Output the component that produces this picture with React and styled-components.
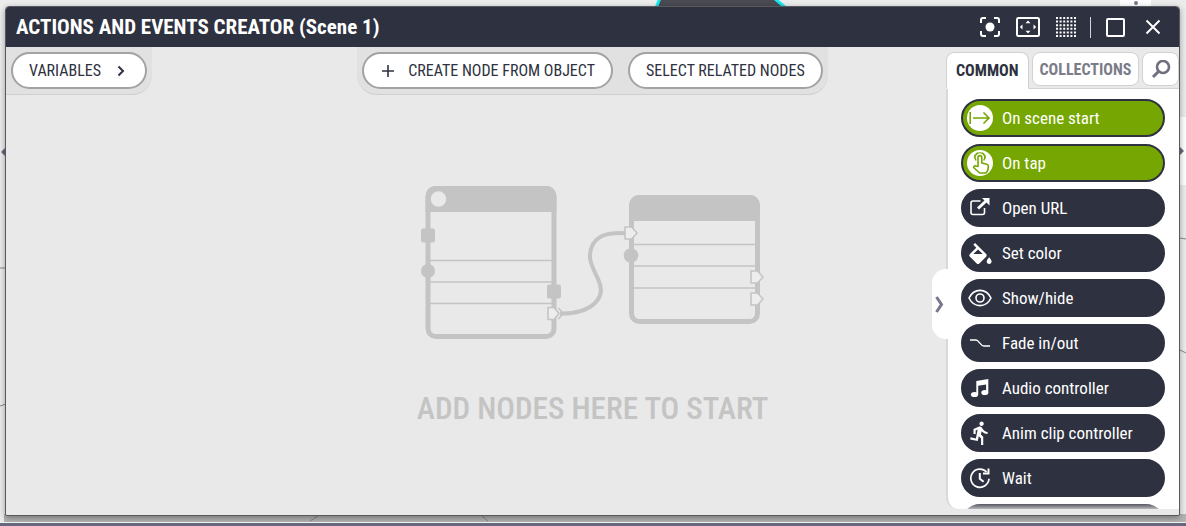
import React from "react";
import styled, { createGlobalStyle } from "styled-components";
import { MdDirectionsRun } from "react-icons/md";

const ink = "#2e3140";
const canvasGrey = "#e9e9e9";
const shapeGrey = "#c4c4c4";

const GlobalStyle = createGlobalStyle`
  *, *::before, *::after { box-sizing: border-box; }
  body {
    margin: 0;
    font-family: "Roboto Condensed", "Liberation Sans Narrow", Roboto, sans-serif;
    color: ${ink};
  }
  button { font: inherit; color: inherit; cursor: pointer; }
  svg { display: block; }
`;

const Page = styled.div`
  position: relative;
  display: flex;
  flex-direction: column;
  height: 100vh;
  min-height: 240px;
  overflow: hidden;
  background: #ececec;
`;

const Scene = styled.svg`
  position: absolute;
  inset: 0;
  width: 100%;
  height: 100%;
`;

const SceneFloor = styled.div`
  position: absolute;
  inset: auto 0 4px 4px;
  height: 8px;
  background: #b4b4b4;
`;

const StatusStrip = styled.footer`
  position: relative;
  height: 4px;
  border-top: 1px solid #f0f0f0;
  background: #66687f;
`;

const Dialog = styled.section`
  position: relative;
  flex: 1;
  min-height: 0;
  display: flex;
  flex-direction: column;
  margin: 6px 6px 6px 5px;
  border: 1px solid #58595c;
  border-radius: 4px 4px 2px 2px;
  background: ${canvasGrey};
  overflow: hidden;
  box-shadow: 0 2px 6px rgba(0, 0, 0, 0.35);
`;

const TitleBar = styled.header`
  flex: none;
  display: flex;
  align-items: center;
  justify-content: space-between;
  height: 40px;
  padding: 0 12px 0 10px;
  background: ${ink};
  color: #fff;
`;

const Title = styled.h1`
  margin: 0;
  font-size: 21px;
  line-height: 24px;
  font-weight: 700;
`;

const WindowTools = styled.div`
  display: flex;
  align-items: center;
  gap: 10px;
`;

const ToolButton = styled.button`
  display: grid;
  place-items: center;
  width: 28px;
  height: 28px;
  padding: 0;
  border: 0;
  background: none;
`;

const Divider = styled.span`
  width: 1px;
  height: 21px;
  background: #d5d5da;
`;

const Body = styled.div`
  flex: 1;
  min-height: 0;
  display: grid;
  grid-template-columns: minmax(0, 1fr) 248px;
  grid-template-rows: minmax(0, 1fr);
`;

const Canvas = styled.main`
  grid-column: 1 / -1;
  grid-row: 1;
  display: flex;
  flex-direction: column;
`;

const Toolbar = styled.div`
  display: grid;
  grid-template-columns: 1fr auto 1fr;
  align-items: start;
`;

const ButtonTray = styled.div`
  justify-self: start;
  display: flex;
  gap: 15px;
  height: 48px;
  padding: 5px;
  border-bottom: 1px solid #cfcfcf;
  border-radius: ${(p) => (p.$docked ? "0 0 20px 0" : "0 0 20px 20px")};
  background: #e1e1e1;
`;

const PillButton = styled.button`
  display: flex;
  align-items: center;
  gap: 12px;
  height: 37px;
  padding: 0 16px;
  border: 2px solid #a3a3a3;
  border-radius: 19px;
  background: #fff;
  font-size: 16px;
  line-height: 20px;
  white-space: nowrap;
`;

const EmptyState = styled.div`
  display: flex;
  flex-direction: column;
  align-items: center;
  gap: 52px;
  padding-top: 90px;
`;

const EmptyText = styled.p`
  margin: 0;
  font-size: 31px;
  line-height: 36px;
  font-weight: 500;
  color: ${shapeGrey};
`;

const Sidebar = styled.aside`
  grid-column: 2;
  grid-row: 1;
  z-index: 1;
  min-height: 0;
  display: grid;
  grid-template-columns: 15px minmax(0, 1fr);
  grid-template-rows: auto minmax(0, 1fr);
  padding: 5px 0 6px;
`;

const Tabs = styled.div`
  grid-column: 2;
  display: flex;
  align-items: flex-start;
  gap: 3px;
  height: 37px;
  border-bottom: 1px solid #d2d2d2;
`;

const Tab = styled.button`
  display: grid;
  place-items: center;
  height: ${(p) => (p.$active ? "37px" : "34px")};
  flex: ${(p) => p.$grow ?? 0} 0 auto;
  padding: ${(p) => (p.$active ? "0 9px" : "1px 7px 0")};
  border: 1px solid #d2d2d2;
  border-bottom-color: ${(p) => (p.$active ? "#fff" : "#d2d2d2")};
  border-radius: ${(p) => (p.$active ? "8px 8px 0 0" : "8px")};
  background: #fff;
  font-size: 16px;
  line-height: 20px;
  font-weight: 700;
  color: ${(p) => (p.$active ? ink : "#7b7c88")};
`;

const Handle = styled.button`
  grid-column: 1;
  grid-row: 2;
  align-self: start;
  z-index: 1;
  display: flex;
  align-items: center;
  height: 70px;
  margin: 180px -2px 0 1px;
  padding: 0 3px;
  border: 0;
  border-radius: 14px 0 0 14px;
  background: #fff;
`;

const NodePanel = styled.div`
  grid-column: 2;
  grid-row: 2;
  min-height: 0;
  padding: 10px 14px 0 13px;
  border-left: 2px solid #d8d8d8;
  border-radius: 0 0 0 12px;
  background: #fff;
  overflow: hidden;
`;

const NodeList = styled.ul`
  display: flex;
  flex-direction: column;
  gap: 7px;
  height: 100%;
  margin: 0;
  padding: 0;
  list-style: none;
  overflow: hidden;
`;

const NodeItem = styled.li`
  flex: none;
`;

const NodeButton = styled.button`
  display: flex;
  align-items: center;
  gap: 9px;
  width: 100%;
  height: 38px;
  padding: 0 4px;
  border: 2px solid ${ink};
  border-radius: 19px;
  background: ${(p) => (p.$trigger ? "#76a602" : ink)};
  color: #fff;
  font-size: 17px;
  line-height: 20px;
  white-space: nowrap;
`;

const NextNode = styled.div`
  height: 38px;
  border-radius: 19px;
  background: linear-gradient(#55565f, #b8b8bc 5px);
`;

const IconSlot = styled.span`
  display: grid;
  place-items: center;
  width: 26px;
  height: 26px;
  border-radius: 50%;
  background: ${(p) => (p.$trigger ? "#fff" : "transparent")};
  color: ${(p) => (p.$trigger ? "#76a602" : "#fff")};
`;

const line = { fill: "none", stroke: "currentColor" };

const FocusIcon = () => (
  <svg width="20" height="20" viewBox="0 0 20 20" {...line} strokeWidth="2">
    <path d="M1 6V3a2 2 0 0 1 2-2h3M14 1h3a2 2 0 0 1 2 2v3M19 14v3a2 2 0 0 1-2 2h-3M6 19H3a2 2 0 0 1-2-2v-3" />
    <circle cx="10" cy="10" r="4.5" fill="currentColor" stroke="none" />
  </svg>
);
const FitIcon = () => (
  <svg width="24" height="20" viewBox="0 0 24 20">
    <rect x="1" y="1" width="22" height="18" rx="1.5" {...line} strokeWidth="2" />
    <path fill="currentColor" d="M12 3.5l2.5 2.7h-5zM12 16.5l2.5-2.7h-5zM3.8 10l2.7-2.5v5zM20.2 10l-2.7-2.5v5z" />
  </svg>
);
const GridIcon = () => (
  <svg width="20" height="20" viewBox="0 0 20 20" {...line} strokeWidth="2" strokeDasharray="2 1.6">
    <path d="M0 1h20M0 4.6h20M0 8.2h20M0 11.8h20M0 15.4h20M0 19h20" />
  </svg>
);
const MaximizeIcon = () => (
  <svg width="20" height="20" viewBox="0 0 20 20" {...line} strokeWidth="2">
    <rect x="2" y="2" width="17" height="17" rx="1" />
  </svg>
);
const CloseIcon = () => (
  <svg width="16" height="16" viewBox="0 0 16 16" {...line} strokeWidth="2">
    <path d="M1.500 1.500l13 13M14.500 1.500l-13 13" />
  </svg>
);
const PlusIcon = () => (
  <svg width="16" height="16" viewBox="0 0 16 16" {...line} strokeWidth="1.6">
    <path d="M2 8h12M8 2v12" />
  </svg>
);
const ChevronIcon = () => (
  <svg width="16" height="16" viewBox="0 0 16 16" {...line} strokeWidth="2">
    <path d="M5.5 3.500L10 8l-4.500 4.500" />
  </svg>
);
const HandleIcon = () => (
  <svg width="9" height="17" viewBox="0 0 9 17" fill="none" stroke="#777889" strokeWidth="3">
    <path d="M1.5 1l5 7.500-5 7.500" />
  </svg>
);
const SearchIcon = () => (
  <svg width="20" height="20" viewBox="0 0 20 20" fill="none" stroke="#6f707d" strokeWidth="2.6">
    <circle cx="12" cy="7" r="6" />
    <path d="M7.5 11.5L2 17" strokeWidth="3" />
  </svg>
);
const StartIcon = () => (
  <svg width="24" height="24" viewBox="0 0 24 24" {...line} strokeWidth="1.6">
    <path d="M2.200 6v12M5 12h16M15.500 6.500L21 12l-5.500 5.500" />
  </svg>
);
const TapIcon = () => (
  <svg width="24" height="24" viewBox="0 0 24 24" {...line} strokeWidth="1.6" strokeLinejoin="round">
    <path d="M10 15.500V6.500a1.900 1.900 0 0 1 3.800 0V12l5 1.200q1.800.5 1.600 2.300l-.8 4.300-1.700 2.200h-6.300l-6-5.500q.5-2.200 2.600-1.500z" />
    <path d="M8.200 9.500A4.700 4.700 0 1 1 15.600 9.500" strokeWidth="1.3" />
    <path d="M6.400 7.500A5.600 5.600 0 0 1 9.500 1.600M14.300 1.600A5.600 5.600 0 0 1 17.400 7.500" strokeWidth="1" />
  </svg>
);
const LinkIcon = () => (
  <svg width="20" height="20" viewBox="0 0 20 20">
    <path d="M10.500 3H3a2 2 0 0 0-2 2v9.500a2 2 0 0 0 2 2H12.500a2 2 0 0 0 2-2v-4.500" {...line} strokeWidth="1.6" />
    <path d="M8 10.500L16 3" {...line} strokeWidth="3" />
    <path d="M12 0H19.500v7.500z" fill="currentColor" />
  </svg>
);
const FillIcon = () => (
  <svg width="23" height="21" viewBox="3 0 18 17" fill="currentColor">
    <path d="M16.560 8.940L7.620 0 6.210 1.410l2.380 2.380-5.150 5.150a1.490 1.490 0 0 0 0 2.120l5.500 5.500c.29.29.68.44 1.060.44s.77-.15 1.060-.44l5.500-5.500c.59-.58.59-1.530 0-2.120zM6.200 9L10 5.210 13.800 9zM19 11.500s-2 2.170-2 3.500c0 1.100.9 2 2 2s2-.9 2-2c0-1.330-2-3.500-2-3.500z" />
  </svg>
);
const EyeIcon = () => (
  <svg width="24" height="18" viewBox="0 0 24 18" {...line} strokeWidth="1.6">
    <path d="M1 9C6-1.200 18-1.200 23 9C18 19.200 6 19.200 1 9z" />
    <circle cx="12" cy="9" r="4" />
  </svg>
);
const FadeIcon = () => (
  <svg width="22" height="10" viewBox="0 0 22 10" {...line} strokeWidth="1.3">
    <path d="M1 2h6c3 0 4 6 8 6h6" />
  </svg>
);
const NotesIcon = () => (
  <svg width="20" height="20" viewBox="0 0 20 20" fill="currentColor">
    <ellipse cx="4.500" cy="16.500" rx="3.600" ry="2.600" />
    <ellipse cx="14.800" cy="14.500" rx="3.500" ry="2.600" />
    <path d="M6.300 3L18.300 1v13.500h-2.200V6.400L8.200 7.800v8.700H6.300z" />
  </svg>
);
const RunIcon = () => <MdDirectionsRun size={26} />;
const WaitIcon = () => (
  <svg width="22" height="22" viewBox="0 0 22 22" {...line} strokeWidth="1.7">
    <path d="M20 11.800A9.100 9.100 0 1 1 17.600 5" />
    <path d="M19.500 1.500V6.500H14" strokeWidth="2" />
    <path d="M10.800 6v5.800l3.800 3" strokeWidth="2" />
  </svg>
);

const EmptyDrawing = () => (
  <svg width="346" height="154" viewBox="0 0 346 154" role="img" aria-label="Two connected nodes">
    <g fill="none" stroke={shapeGrey}>
      <rect x="8" y="3.500" width="126" height="148" rx="8" strokeWidth="5" />
      <rect x="211.500" y="12.500" width="126" height="124" rx="8" strokeWidth="5" />
      <path strokeWidth="1.5" d="M10 75.500h122M10 97h122M10 118.500h122M214 59.500h121M214 81h121M214 103h121" />
      <path strokeWidth="4" d="M140 128.500C170 129 188 114 178 94C170 78 167 70 173 59C180 48 192 48 206 48" />
    </g>
    <g fill={shapeGrey}>
      <path d="M5.500 27V11a10 10 0 0 1 10-10h111a10 10 0 0 1 10 10v16zM209 36V20a10 10 0 0 1 10-10h111a10 10 0 0 1 10 10v16z" />
      <rect x="1" y="43.500" width="14" height="14" rx="2" />
      <circle cx="8" cy="86" r="7" />
      <rect x="127" y="99.500" width="14" height="14" rx="2" />
      <circle cx="211" cy="70.500" r="7.300" />
    </g>
    <circle cx="18.500" cy="14" r="7.700" fill={canvasGrey} />
    <g fill="#ededed" stroke={shapeGrey} strokeWidth="1.600" strokeLinejoin="round">
      <path d="M128 122.500h6l5 6-5 6h-6zM205 42h6.500l5.500 6-5.500 6H205zM331 86h6.500l5.500 6-5.500 6H331zM331 108h6.500l5.500 6-5.500 6H331z" />
      <path fill="none" d="M138.500 123l4.500 5.500-4.500 5.500" />
    </g>
  </svg>
);

const nodes = [
  { label: "On scene start", icon: StartIcon, trigger: true },
  { label: "On tap", icon: TapIcon, trigger: true },
  { label: "Open URL", icon: LinkIcon },
  { label: "Set color", icon: FillIcon },
  { label: "Show/hide", icon: EyeIcon },
  { label: "Fade in/out", icon: FadeIcon },
  { label: "Audio controller", icon: NotesIcon },
  { label: "Anim clip controller", icon: RunIcon },
  { label: "Wait", icon: WaitIcon },
];

const tools = [
  ["Focus", FocusIcon],
  ["Fit to view", FitIcon],
  ["Toggle grid", GridIcon],
];

export default function App() {
  return (
    <Page>
      <GlobalStyle />
      <SceneFloor />
      <Scene aria-hidden="true">
        <path d="M656 8l4-10h114l12 10z" fill="#4a4b52" stroke="#19e6ee" strokeWidth="3" />
        <rect x="1120" width="31" height="7" fill="#fff" />
        <circle cx="1136" cy="3" r="2" fill="#777889" />
        <rect x="1180" y="117" width="6" height="68" fill="#fff" />
        <path d="M5 148v8l-4-4zM1180 147v8l4-4z" fill="#666879" />
        <path d="M0 406l6-2M310 521l8-5M482 516l6 5M1180 238l6 1M1180 350l6 3M0 268h6" fill="none" stroke="#85868f" />
      </Scene>
      <Dialog aria-label="Actions and events creator">
        <TitleBar>
          <Title>ACTIONS AND EVENTS CREATOR (Scene 1)</Title>
          <WindowTools>
            {tools.map(([name, Icon]) => (
              <ToolButton key={name} aria-label={name}><Icon /></ToolButton>
            ))}
            <Divider />
            <ToolButton aria-label="Maximize"><MaximizeIcon /></ToolButton>
            <ToolButton aria-label="Close"><CloseIcon /></ToolButton>
          </WindowTools>
        </TitleBar>
        <Body>
          <Canvas>
            <Toolbar>
              <ButtonTray $docked>
                <PillButton>VARIABLES <ChevronIcon /></PillButton>
              </ButtonTray>
              <ButtonTray>
                <PillButton><PlusIcon /> CREATE NODE FROM OBJECT</PillButton>
                <PillButton>SELECT RELATED NODES</PillButton>
              </ButtonTray>
            </Toolbar>
            <EmptyState>
              <EmptyDrawing />
              <EmptyText>ADD NODES HERE TO START</EmptyText>
            </EmptyState>
          </Canvas>
          <Sidebar>
            <Tabs role="tablist">
              <Tab role="tab" aria-selected="true" $active>COMMON</Tab>
              <Tab role="tab" aria-selected="false">COLLECTIONS</Tab>
              <Tab aria-label="Search nodes" $grow={1}><SearchIcon /></Tab>
            </Tabs>
            <Handle aria-label="Collapse panel"><HandleIcon /></Handle>
            <NodePanel>
              <NodeList>
                {nodes.map(({ label, icon: Icon, trigger }) => (
                  <NodeItem key={label}>
                    <NodeButton $trigger={trigger}>
                      <IconSlot $trigger={trigger}><Icon /></IconSlot>
                      {label}
                    </NodeButton>
                  </NodeItem>
                ))}
                <NodeItem aria-hidden="true"><NextNode /></NodeItem>
              </NodeList>
            </NodePanel>
          </Sidebar>
        </Body>
      </Dialog>
      <StatusStrip />
    </Page>
  );
}
